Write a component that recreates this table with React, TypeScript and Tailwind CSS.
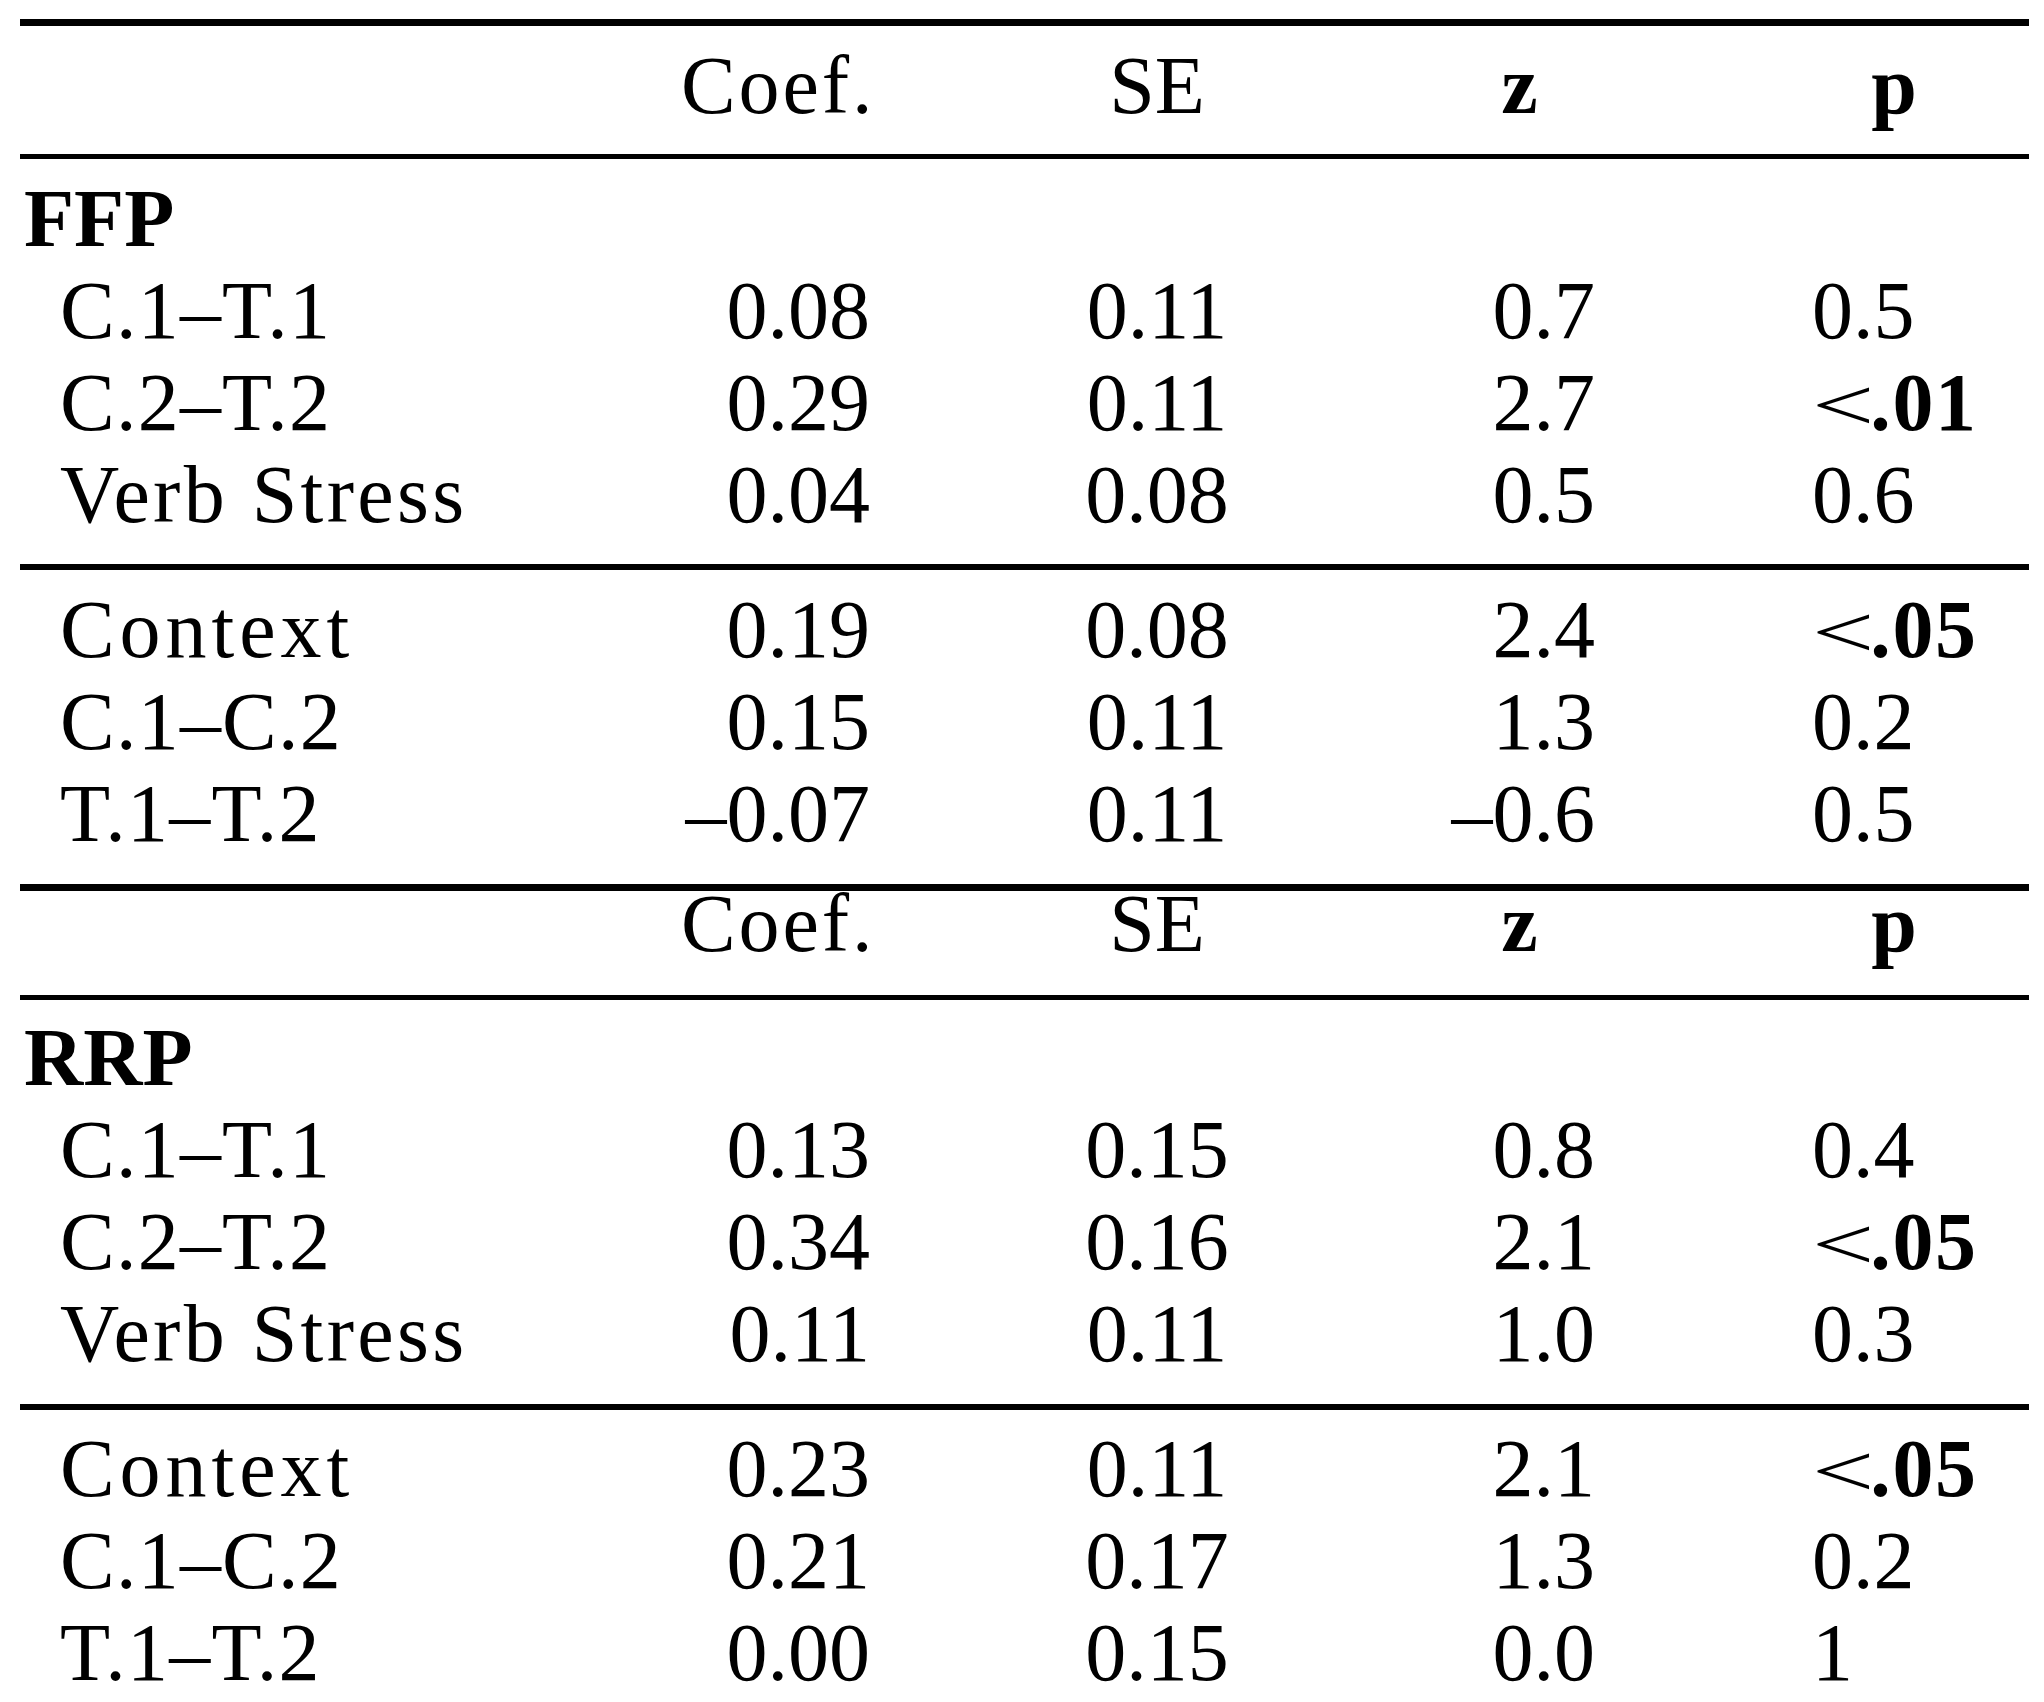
type Stat = {
  label: string;
  coef: string;
  se: string;
  z: string;
  p: string;
  track?: string;
};

const grid = "grid grid-cols-[661px_189px_574px_151px_217px_164px]";

const ffp: Stat[][] = [
  [
    { label: "C.1–T.1", coef: "0.08", se: "0.11", z: "0.7", p: "0.5" },
    { label: "C.2–T.2", coef: "0.29", se: "0.11", z: "2.7", p: "<.01" },
    { label: "Verb Stress", coef: "0.04", se: "0.08", z: "0.5", p: "0.6", track: "tracking-[0.04em]" },
  ],
  [
    { label: "Context", coef: "0.19", se: "0.08", z: "2.4", p: "<.05", track: "tracking-[0.06em]" },
    { label: "C.1–C.2", coef: "0.15", se: "0.11", z: "1.3", p: "0.2" },
    { label: "T.1–T.2", coef: "–0.07", se: "0.11", z: "–0.6", p: "0.5" },
  ],
];

const rrp: Stat[][] = [
  [
    { label: "C.1–T.1", coef: "0.13", se: "0.15", z: "0.8", p: "0.4" },
    { label: "C.2–T.2", coef: "0.34", se: "0.16", z: "2.1", p: "<.05" },
    { label: "Verb Stress", coef: "0.11", se: "0.11", z: "1.0", p: "0.3", track: "tracking-[0.04em]" },
  ],
  [
    { label: "Context", coef: "0.23", se: "0.11", z: "2.1", p: "<.05", track: "tracking-[0.06em]" },
    { label: "C.1–C.2", coef: "0.21", se: "0.17", z: "1.3", p: "0.2" },
    { label: "T.1–T.2", coef: "0.00", se: "0.15", z: "0.0", p: "1" },
  ],
];

function PValue({ value }: { value: string }) {
  if (value.startsWith("<")) {
    return (
      <>
        {/* the math "<" is wider and flatter than the text glyph */}
        <span className="mr-[12px] inline-block origin-[0_80%] scale-x-[1.35] scale-y-[0.9]">&lt;</span>
        <span className="font-bold tracking-[0.02em]">{value.slice(1)}</span>
      </>
    );
  }
  return <>{value}</>;
}

function Row({ row }: { row: Stat }) {
  return (
    <div className={grid}>
      <div className={`pl-[40px] ${row.track ?? "tracking-[0.015em]"}`}>{row.label}</div>
      <div className="text-right">{row.coef}</div>
      <div className="text-center">{row.se}</div>
      <div className="text-right">{row.z}</div>
      <div />
      <div className="whitespace-nowrap">
        <PValue value={row.p} />
      </div>
    </div>
  );
}

function Header({ className }: { className: string }) {
  return (
    <div className={`${grid} ${className}`}>
      <div />
      <div className="-mr-[3px] text-right tracking-[0.035em]">Coef.</div>
      <div className="text-center">SE</div>
      <div className="text-center font-bold">z</div>
      <div />
      <div className="text-center font-bold">p</div>
    </div>
  );
}

function Block({ rows, className }: { rows: Stat[]; className: string }) {
  return (
    <div className={className}>
      {rows.map((r) => (
        <Row key={r.label} row={r} />
      ))}
    </div>
  );
}

export default function App() {
  return (
    <div className="min-h-screen w-[2044px] bg-white text-black">
      <div
        className="ml-[20px] w-[2009px] pt-[19px] text-[82px] leading-[92px]"
        style={{ fontFamily: '"Liberation Serif", "Times New Roman", serif' }}
      >
        <div className="h-[7px] bg-black" />
        <Header className="pt-[14px] pb-[22px]" />
        <div className="h-[5px] bg-black" />
        <div className="pt-[14px] pb-[23px]">
          <div className="pl-[4px] font-bold">FFP</div>
          <Block rows={ffp[0]} className="" />
        </div>
        <div className="h-[6px] bg-black" />
        <Block rows={ffp[1]} className="pt-[14px] pb-[24px]" />
        <div className="h-[7px] bg-black" />
        <Header className="leading-[66px] pb-[38px]" />
        <div className="h-[5px] bg-black" />
        <div className="pt-[12px] pb-[24px]">
          <div className="pl-[4px] font-bold">RRP</div>
          <Block rows={rrp[0]} className="" />
        </div>
        <div className="h-[6px] bg-black" />
        <Block rows={rrp[1]} className="pt-[13px]" />
      </div>
    </div>
  );
}
